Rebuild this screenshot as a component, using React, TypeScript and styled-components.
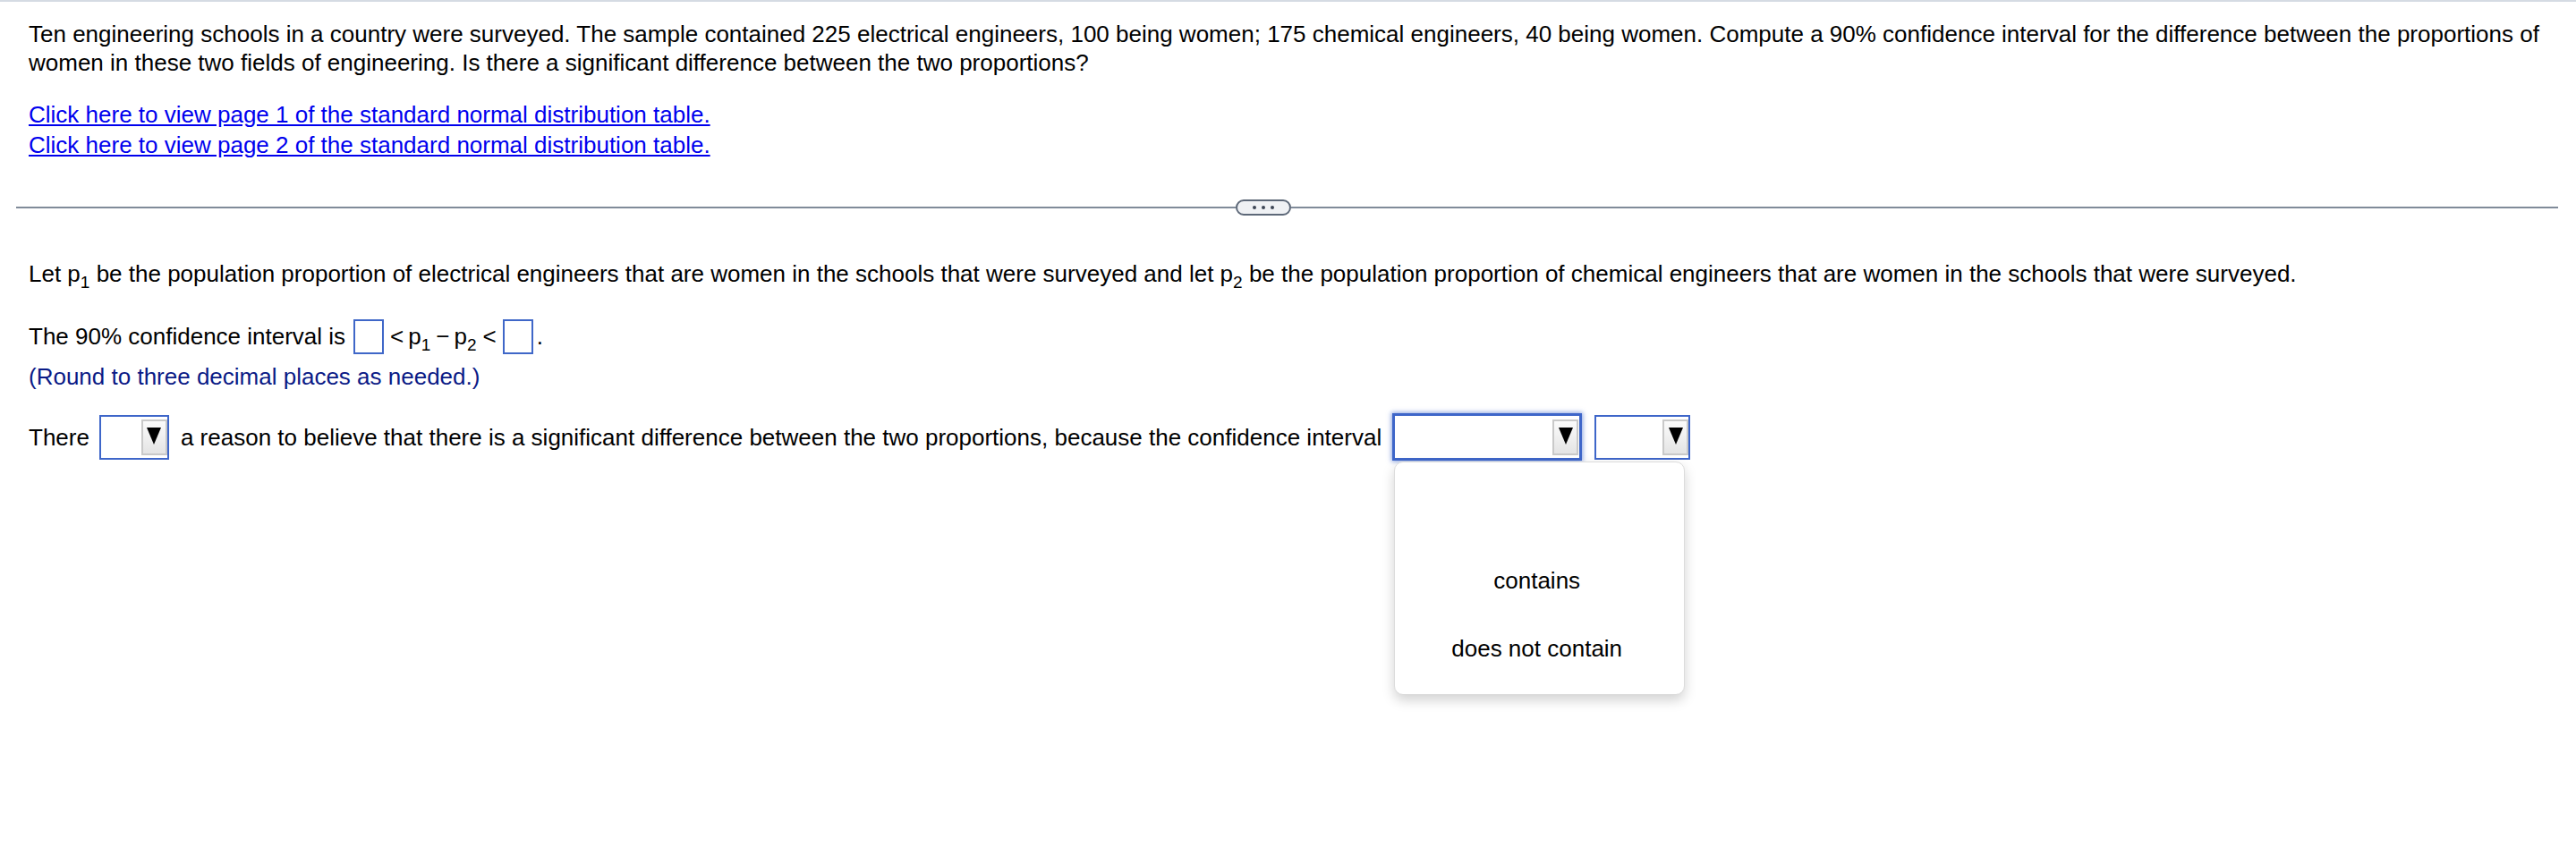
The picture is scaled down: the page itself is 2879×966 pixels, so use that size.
import { createGlobalStyle } from 'styled-components';
import styled from 'styled-components';

const GlobalStyle = createGlobalStyle`
  html, body {
    margin: 0;
    padding: 0;
    background: #ffffff;
  }
  body {
    font-family: "Liberation Sans", Arial, Helvetica, sans-serif;
    color: #000000;
  }
`;

const Page = styled.div`
  min-height: 966px;
  border-top: 2px solid #d5dbe3;
  padding-top: 20px;
  box-sizing: border-box;
`;

const Section = styled.section`
  padding: 0 32px;
`;

const Prompt = styled.p`
  margin: 0;
  font-size: 26px;
  line-height: 32px;
`;

const LinkList = styled.div`
  margin-top: 25px;
  display: flex;
  flex-direction: column;
  align-items: flex-start;
`;

const TableLink = styled.a`
  font-size: 26px;
  line-height: 34px;
  color: #0000ee;
  text-decoration: underline;
  text-underline-offset: 2px;
  cursor: pointer;
`;

const Divider = styled.div`
  display: flex;
  align-items: center;
  margin: 44px 20px 0 18px;
  height: 18px;
`;

const Rule = styled.div<{ $width?: number }>`
  height: 2px;
  background: #808b99;
  flex: ${({ $width }) => ($width ? `0 0 ${$width}px` : '1')};
`;

const Pill = styled.button`
  width: 62px;
  height: 18px;
  box-sizing: border-box;
  border: 2px solid #5d6878;
  border-radius: 9px;
  background: #eff1f4;
  display: flex;
  align-items: center;
  justify-content: center;
  gap: 6px;
  padding: 0;
  cursor: pointer;
`;

const Dot = styled.span`
  width: 4px;
  height: 4px;
  border-radius: 50%;
  background: #3d4655;
`;

const Answer = styled(Section)`
  margin-top: 49px;
`;

const Sentence = styled.p`
  margin: 0;
  font-size: 26px;
  line-height: 32px;
`;

const Sub = styled.sub`
  font-size: 19px;
  line-height: 0;
  vertical-align: -7px;
`;

const IntervalRow = styled.div`
  margin-top: 35px;
  display: flex;
  align-items: center;
  font-size: 26px;
  height: 39px;
`;

const Token = styled.span<{ $gap?: number }>`
  margin-left: ${({ $gap }) => $gap ?? 0}px;
  white-space: pre;
`;

const AnswerBox = styled.span<{ $gap?: number }>`
  display: inline-block;
  width: 34px;
  height: 39px;
  box-sizing: border-box;
  border: 2px solid #3f67c8;
  background: #ffffff;
  margin-left: ${({ $gap }) => $gap ?? 0}px;
`;

const Hint = styled.p`
  margin: 9px 0 0;
  font-size: 26px;
  line-height: 32px;
  color: #0a1a86;
`;

const ChoiceRow = styled.div`
  margin-top: 25px;
  display: flex;
  align-items: center;
  font-size: 26px;
  line-height: 32px;
`;

const Select = styled.div<{ $width: number; $focused?: boolean; $gap?: number }>`
  position: relative;
  width: ${({ $width }) => $width}px;
  height: ${({ $focused }) => ($focused ? 53 : 50)}px;
  box-sizing: border-box;
  border: ${({ $focused }) => ($focused ? 3 : 2)}px solid #3e66c9;
  box-shadow: ${({ $focused }) => ($focused ? '0 0 5px 1px rgba(62, 102, 201, 0.6)' : 'none')};
  background: #ffffff;
  margin-left: ${({ $gap }) => $gap ?? 0}px;
  display: flex;
  align-items: center;
  justify-content: flex-end;
  padding-right: ${({ $focused }) => ($focused ? 1 : 0)}px;
  flex-shrink: 0;
`;

const ArrowButton = styled.span`
  width: 29px;
  height: 40px;
  box-sizing: border-box;
  border: 2px solid #c9c9c9;
  background: linear-gradient(#fbfbfb, #e4e4e4);
  display: flex;
  align-items: center;
  justify-content: center;
  padding-bottom: 2px;
`;

const Menu = styled.div`
  position: absolute;
  top: calc(100% + 4px);
  left: -1px;
  width: 325px;
  box-sizing: border-box;
  padding: 18px 0 13px;
  background: #ffffff;
  border: 1px solid #dcdcdc;
  border-radius: 10px;
  box-shadow: 0 6px 14px rgba(0, 0, 0, 0.18);
  z-index: 10;
`;

const Option = styled.div`
  height: 76px;
  display: flex;
  align-items: center;
  justify-content: center;
  padding-right: 6px;
  font-size: 26px;
  color: #000000;
`;

function Arrow() {
  return (
    <ArrowButton>
      <svg width="16" height="19" viewBox="0 0 16 19">
        <polygon points="0,0 16,0 8,19" fill="#000" />
      </svg>
    </ArrowButton>
  );
}

export default function App() {
  return (
    <>
      <GlobalStyle />
      <Page>
        <Section>
          <Prompt>
            Ten engineering schools in a country were surveyed. The sample contained 225 electrical engineers, 100 being
            women; 175 chemical engineers, 40 being women. Compute a 90% confidence interval for the difference between
            the proportions of women in these two fields of engineering. Is there a significant difference between the two
            proportions?
          </Prompt>
          <LinkList>
            <TableLink>Click here to view page 1 of the standard normal distribution table.</TableLink>
            <TableLink>Click here to view page 2 of the standard normal distribution table.</TableLink>
          </LinkList>
        </Section>

        <Divider>
          <Rule $width={1363} />
          <Pill aria-label="more">
            <Dot />
            <Dot />
            <Dot />
          </Pill>
          <Rule />
        </Divider>

        <Answer>
          <Sentence>
            Let p<Sub>1</Sub> be the population proportion of electrical engineers that are women in the schools that
            were surveyed and let p<Sub>2</Sub> be the population proportion of chemical engineers that are women in the
            schools that were surveyed.
          </Sentence>

          <IntervalRow>
            <Token>The 90% confidence interval is</Token>
            <AnswerBox $gap={9} />
            <Token $gap={7}>&lt;</Token>
            <Token $gap={5}>
              p<Sub>1</Sub>
            </Token>
            <Token $gap={6}>−</Token>
            <Token $gap={5}>
              p<Sub>2</Sub>
            </Token>
            <Token $gap={7}>&lt;</Token>
            <AnswerBox $gap={7} />
            <Token $gap={4}>.</Token>
          </IntervalRow>

          <Hint>(Round to three decimal places as needed.)</Hint>

          <ChoiceRow>
            <Token>There</Token>
            <Select $width={78} $gap={11}>
              <Arrow />
            </Select>
            <Token $gap={13}>
              a reason to believe that there is a significant difference between the two proportions, because the
              confidence interval
            </Token>
            <Select $width={212} $focused $gap={12}>
              <Arrow />
              <Menu>
                <Option />
                <Option>contains</Option>
                <Option>does not contain</Option>
              </Menu>
            </Select>
            <Select $width={107} $gap={14}>
              <Arrow />
            </Select>
          </ChoiceRow>
        </Answer>
      </Page>
    </>
  );
}
